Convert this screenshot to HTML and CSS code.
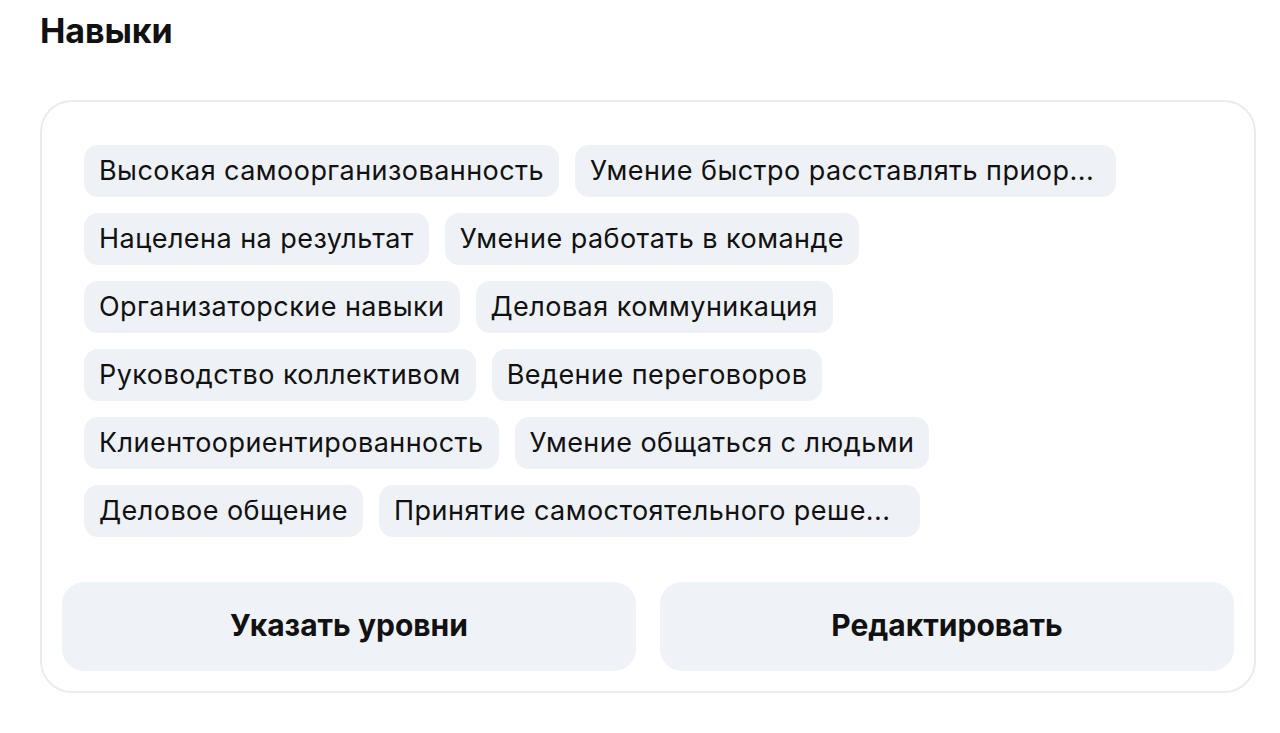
FILE: index.html
```html
<!DOCTYPE html>
<html lang="ru">
<head>
<meta charset="utf-8">
<link rel="stylesheet" href="styles.css">
</head>
<body>
<section class="skills">
  <h2 class="title">Навыки</h2>
  <div class="card">
    <ul class="tags">
      <li class="tag">Высокая самоорганизованность</li>
      <li class="tag tag--clip">Умение быстро расставлять приор...</li>
      <li class="tag">Нацелена на результат</li>
      <li class="tag">Умение работать в команде</li>
      <li class="tag">Организаторские навыки</li>
      <li class="tag">Деловая коммуникация</li>
      <li class="tag">Руководство коллективом</li>
      <li class="tag">Ведение переговоров</li>
      <li class="tag">Клиентоориентированность</li>
      <li class="tag">Умение общаться с людьми</li>
      <li class="tag">Деловое общение</li>
      <li class="tag tag--clip">Принятие самостоятельного реше...</li>
    </ul>
    <div class="actions">
      <button class="btn">Указать уровни</button>
      <button class="btn">Редактировать</button>
    </div>
  </div>
</section>
</body>
</html>
```

FILE: styles.css
```css
* { box-sizing: border-box; }
html, body { margin: 0; padding: 0; background: #fff; }
body {
  font-family: Inter, "Noto Sans", sans-serif;
  color: #111;
}
.skills {
  padding: 10px 24px 0 40px;
}
.title {
  margin: 0 0 48px 0;
  font-size: 34px;
  font-weight: 700;
  line-height: 42px;
  letter-spacing: -0.1px;
}
.card {
  width: 1216px;
  border: 2px solid #ebebeb;
  border-radius: 32px;
  padding: 43px 20px 20px 20px;
}
.tags {
  list-style: none;
  margin: 0;
  padding: 0 22px;
  display: flex;
  flex-wrap: wrap;
  gap: 16px 16px;
  align-items: flex-start;
  max-width: 1100px;
}
.tag {
  background: #eef2f7;
  border-radius: 14px;
  height: 52px;
  line-height: 52px;
  padding: 0 15px;
  font-size: 27px;
  letter-spacing: 0.45px;
  white-space: nowrap;
}
.tag--clip {
  width: 541px;
  overflow: hidden;
}
.actions {
  margin-top: 45px;
  display: flex;
  gap: 24px;
}
.btn {
  flex: 1;
  height: 89px;
  border: none;
  border-radius: 22px;
  background: #eff3f8;
  font-family: inherit;
  font-size: 30px;
  font-weight: 700;
  color: #111;
  padding-bottom: 4px;
}
```
